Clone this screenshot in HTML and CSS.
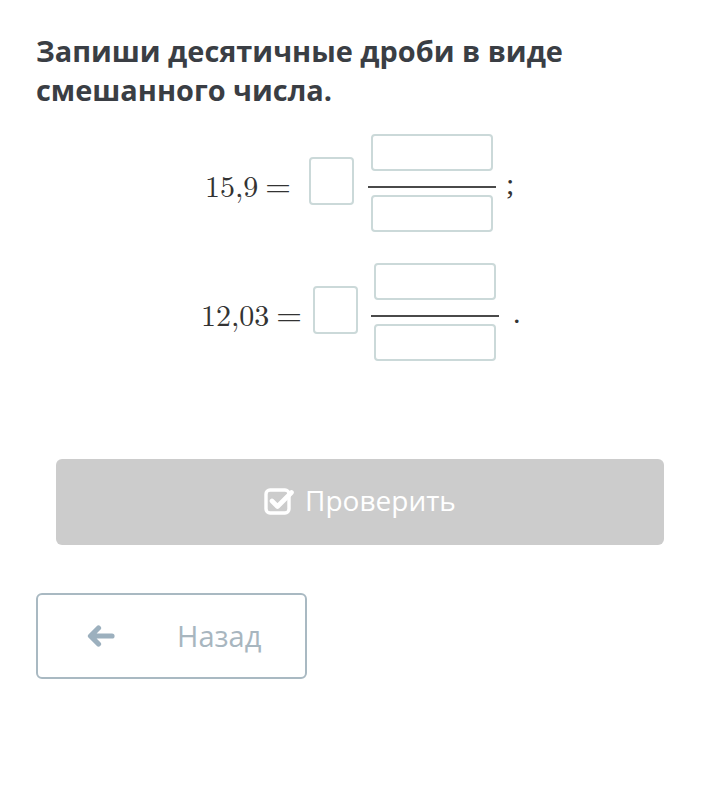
FILE: index.html
```html
<!DOCTYPE html>
<html lang="ru">
<head>
<meta charset="utf-8">
<link rel="stylesheet" href="styles.css">
</head>
<body>
<div class="page">
  <h1 class="title">Запиши десятичные дроби в виде смешанного числа.</h1>

  <div class="eq eq-first">
    <span class="lhs">15,9<span class="eqsign">=</span></span>
    <span class="whole box"></span>
    <span class="frac">
      <span class="num box"></span>
      <span class="bar"></span>
      <span class="den box"></span>
    </span>
    <span class="punct">;</span>
  </div>

  <div class="eq eq-second">
    <span class="lhs">12,03<span class="eqsign">=</span></span>
    <span class="whole box"></span>
    <span class="frac">
      <span class="num box"></span>
      <span class="bar"></span>
      <span class="den box"></span>
    </span>
    <span class="punct dot">.</span>
  </div>

  <button class="check-btn" type="button">
    <svg class="check-icon" viewBox="0 0 30 28" width="30" height="28" aria-hidden="true">
      <rect x="2" y="3" width="23" height="23" rx="4" fill="none" stroke="#fff" stroke-width="3.4"/>
      <path d="M8 14 L13.5 19.5 L27.5 5.5" fill="none" stroke="#fff" stroke-width="4.6" stroke-linecap="round" stroke-linejoin="round"/>
    </svg>
    <span>Проверить</span>
  </button>

  <button class="back-btn" type="button">
    <svg class="arrow-icon" viewBox="0 0 28 22" width="28" height="22" aria-hidden="true">
      <path d="M11.5 3 L3.5 11 L11.5 19 M4.5 11 L25 11" fill="none" stroke="#9cb0be" stroke-width="5.2" stroke-linecap="round" stroke-linejoin="round"/>
    </svg>
    <span class="back-label">Назад</span>
  </button>
</div>
</body>
</html>
```

FILE: styles.css
```css
html, body {
  margin: 0;
  padding: 0;
  background: #ffffff;
}

.page {
  width: 720px;
  height: 806px;
  box-sizing: border-box;
  padding: 31px 0 0 0;
  font-family: "Open Sans", "Liberation Sans", sans-serif;
}

.title {
  margin: 0 0 0 36px;
  width: 640px;
  font-size: 28.9px;
  line-height: 39px;
  font-weight: 700;
  color: #3a3e44;
}

.eq {
  display: flex;
  justify-content: flex-start;
  align-items: flex-start;
  height: 96px;
}

.eq-first {
  margin-top: 25px;
  padding-left: 205px;
}

.eq-second {
  margin-top: 33px;
  padding-left: 201px;
}

.lhs {
  font-family: "Latin Modern Roman", "Liberation Serif", "DejaVu Serif", serif;
  font-size: 30px;
  line-height: 30px;
  color: #333333;
  margin-top: 35px;
  white-space: nowrap;
}

.eqsign {
  padding-left: 7px;
  font-size: 33px;
}

.box {
  display: block;
  box-sizing: border-box;
  border: 2px solid #cbd9d9;
  border-radius: 4px;
  background: #ffffff;
}

.whole {
  width: 45px;
  height: 48px;
  margin-top: 23px;
  margin-left: 18px;
}

.eq-second .whole {
  margin-left: 11px;
}

.frac {
  display: flex;
  flex-direction: column;
  align-items: center;
  width: 128px;
  margin-left: 14px;
}

.eq-second .frac {
  margin-left: 13px;
}

.num, .den {
  width: 122px;
  height: 37px;
}

.bar {
  display: block;
  width: 128px;
  height: 2px;
  background: #4a4a4a;
  margin-top: 15px;
  margin-bottom: 7px;
}

.punct {
  font-family: "Liberation Serif", "DejaVu Serif", serif;
  font-size: 30px;
  line-height: 30px;
  color: #333333;
  margin-top: 35px;
  margin-left: 10px;
}

.dot {
  margin-left: 14px;
}

.check-btn {
  display: flex;
  align-items: center;
  justify-content: center;
  gap: 11px;
  width: 608px;
  height: 86px;
  margin: 100px 0 0 56px;
  padding: 0 0 4px 0;
  border: none;
  border-radius: 6px;
  background: #cccccc;
  color: #ffffff;
  font-family: "Open Sans", "Liberation Sans", sans-serif;
  font-size: 28px;
}

.check-icon {
  display: block;
  margin-top: 2px;
}

.back-btn {
  display: flex;
  align-items: center;
  box-sizing: border-box;
  width: 271px;
  height: 86px;
  margin: 48px 0 0 36px;
  padding: 0 0 2px 49px;
  border: 2px solid #a9b9c2;
  border-radius: 6px;
  background: #ffffff;
  font-family: "Open Sans", "Liberation Sans", sans-serif;
  font-size: 29px;
  color: #a8b6bf;
}

.arrow-icon {
  display: block;
  margin-top: 2px;
}

.back-label {
  margin-left: 62px;
}
```
